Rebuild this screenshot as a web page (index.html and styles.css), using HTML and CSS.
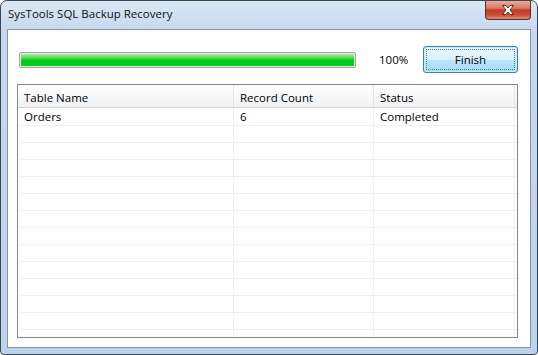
FILE: index.html
```html
<!DOCTYPE html>
<html>
<head>
<meta charset="utf-8">
<link rel="stylesheet" href="styles.css">
</head>
<body>
<div class="window">
  <div class="titlebar">
    <span class="title">SysTools SQL Backup Recovery</span>
    <div class="close">
      <svg width="16" height="12" viewBox="0 0 16 12">
        <path d="M2.5 1.5 L6 1.5 L8 4 L10 1.5 L13.5 1.5 L10 6 L13.5 10.5 L10 10.5 L8 8 L6 10.5 L2.5 10.5 L6 6 Z" fill="#fff" stroke="#5a2a24" stroke-width="1" stroke-linejoin="round"/>
      </svg>
    </div>
  </div>
  <div class="client">
    <div class="toprow">
      <div class="progress"><div class="fill"></div></div>
      <span class="pct">100%</span>
      <button class="btn"><span class="focus">Finish</span></button>
    </div>
    <div class="list">
      <div class="head">
        <div class="cell c1">Table Name</div>
        <div class="cell c2">Record Count</div>
        <div class="cell c3">Status</div>
        <div class="cell c4"></div>
      </div>
      <div class="rows">
        <div class="row first"><div class="cell c1">Orders</div><div class="cell c2">6</div><div class="cell c3">Completed</div><div class="cell c4"></div></div>
        <div class="row"><div class="cell c1"></div><div class="cell c2"></div><div class="cell c3"></div><div class="cell c4"></div></div>
        <div class="row"><div class="cell c1"></div><div class="cell c2"></div><div class="cell c3"></div><div class="cell c4"></div></div>
        <div class="row"><div class="cell c1"></div><div class="cell c2"></div><div class="cell c3"></div><div class="cell c4"></div></div>
        <div class="row"><div class="cell c1"></div><div class="cell c2"></div><div class="cell c3"></div><div class="cell c4"></div></div>
        <div class="row"><div class="cell c1"></div><div class="cell c2"></div><div class="cell c3"></div><div class="cell c4"></div></div>
        <div class="row"><div class="cell c1"></div><div class="cell c2"></div><div class="cell c3"></div><div class="cell c4"></div></div>
        <div class="row"><div class="cell c1"></div><div class="cell c2"></div><div class="cell c3"></div><div class="cell c4"></div></div>
        <div class="row"><div class="cell c1"></div><div class="cell c2"></div><div class="cell c3"></div><div class="cell c4"></div></div>
        <div class="row"><div class="cell c1"></div><div class="cell c2"></div><div class="cell c3"></div><div class="cell c4"></div></div>
        <div class="row"><div class="cell c1"></div><div class="cell c2"></div><div class="cell c3"></div><div class="cell c4"></div></div>
        <div class="row"><div class="cell c1"></div><div class="cell c2"></div><div class="cell c3"></div><div class="cell c4"></div></div>
        <div class="row"><div class="cell c1"></div><div class="cell c2"></div><div class="cell c3"></div><div class="cell c4"></div></div>
        <div class="row"><div class="cell c1"></div><div class="cell c2"></div><div class="cell c3"></div><div class="cell c4"></div></div>
      </div>
    </div>
  </div>
</div>
</body>
</html>
```
FILE: styles.css
```css
html, body {
  margin: 0;
  padding: 0;
  background: #ffffff;
}
body {
  font-family: "Open Sans", "Noto Sans", sans-serif;
  font-size: 12px;
  color: #000;
}
.window {
  width: 538px;
  height: 355px;
  box-sizing: border-box;
  border: 1px solid #3d4650;
  border-radius: 7px 7px 4px 4px;
  background: linear-gradient(180deg, #dbe7f5 0px, #c6d9ef 28px, #bcd3ec 100%);
  display: flex;
  flex-direction: column;
  overflow: hidden;
}
.titlebar {
  height: 28px;
  display: flex;
  justify-content: space-between;
  align-items: flex-start;
  flex: none;
}
.title {
  margin: 5px 0 0 7px;
  font-family: "Open Sans", sans-serif;
  font-size: 11.5px;
  color: #101010;
}
.close {
  width: 46px;
  height: 19px;
  margin-right: 6px;
  box-sizing: border-box;
  border: 1px solid #5c2f29;
  border-top: none;
  border-radius: 0 0 4px 4px;
  background: linear-gradient(180deg, #e9a99c 0%, #d77a67 40%, #c43c27 50%, #c84a34 75%, #de8a72 100%);
  display: flex;
  align-items: center;
  justify-content: center;
}
.client {
  margin: 0 6px 6px 6px;
  flex: 1;
  min-height: 0;
  background: #ffffff;
  border: 1px solid #8394a6;
  display: flex;
  flex-direction: column;
}
.toprow {
  display: flex;
  align-items: center;
  margin: 16px 12px 0 11px;
  height: 27px;
  flex: none;
}
.progress {
  width: 337px;
  height: 16px;
  box-sizing: border-box;
  border: 1px solid #a4a4a4;
  border-radius: 2px;
  background: #e6e6e6;
  padding: 1px;
}
.fill {
  height: 100%;
  border-radius: 1px;
  background: linear-gradient(180deg, #a8f0a8 0%, #5cdc5c 30%, #00c818 55%, #00d21e 100%);
}
.pct {
  margin-left: 23px;
  font-size: 11.5px;
  color: #000;
}
.btn {
  margin-left: auto;
  width: 95px;
  height: 27px;
  box-sizing: border-box;
  border: 1px solid #3c7fb1;
  border-radius: 3px;
  padding: 2px;
  background: linear-gradient(180deg, #eaf6fd 0%, #d9f0fc 50%, #bee6fd 51%, #a7d9f5 100%);
  box-shadow: inset 0 0 0 1px #c9ecfd;
  font-family: "Open Sans", sans-serif;
  font-size: 11.5px;
  color: #000;
  display: flex;
}
.focus {
  flex: 1;
  border: 1px dotted #3c7fb1;
  display: flex;
  align-items: center;
  justify-content: center;
}
.list {
  margin: 11px 12px 9px 9px;
  flex: 1;
  min-height: 0;
  border: 1px solid #828790;
  display: flex;
  flex-direction: column;
  overflow: hidden;
}
.head {
  display: flex;
  height: 23px;
  box-sizing: border-box;
  background: linear-gradient(180deg, #ffffff 0%, #f7f8f9 50%, #f0f1f3 100%);
  border-bottom: 1px solid #d5d5d5;
  flex: none;
}
.head .cell {
  border-right: 1px solid #e3e4e6;
  padding-top: 5px;
}
.rows {
  flex: 1;
  min-height: 0;
  overflow: hidden;
}
.row {
  display: flex;
  height: 17px;
  box-sizing: border-box;
  border-bottom: 1px solid #efefef;
}
.row.first {
  height: 18px;
}
.row .cell {
  border-right: 1px solid #efefef;
  line-height: 16px;
  padding-top: 1px;
}
.cell {
  box-sizing: border-box;
  padding-left: 6px;
  white-space: nowrap;
  overflow: hidden;
  font-size: 11.5px;
  color: #000;
}
.c1 { width: 216px; }
.c2 { width: 140px; }
.c3 { width: 141px; }
.c4 { flex: 1; padding: 0; border-right: none !important; }
```
